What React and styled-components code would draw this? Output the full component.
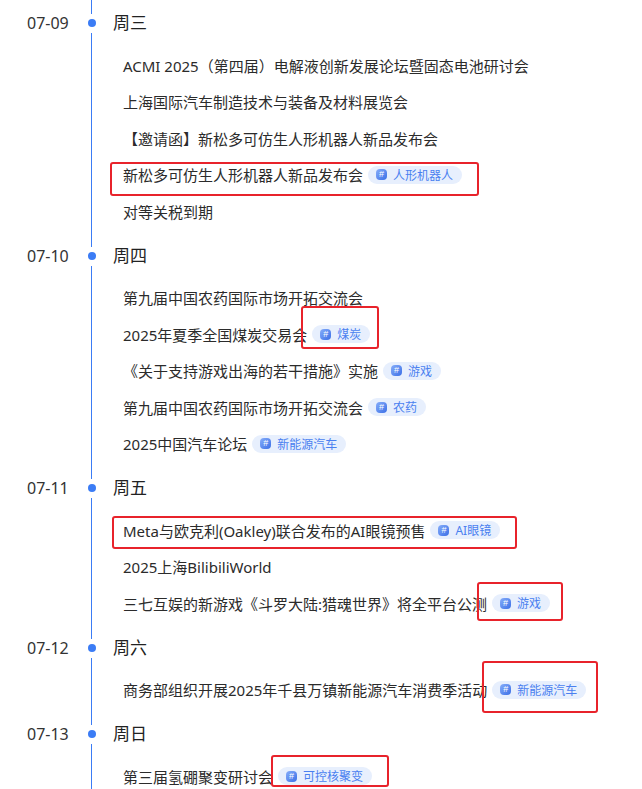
import React from "react";
import styled, { createGlobalStyle } from "styled-components";

const GlobalStyle = createGlobalStyle`
  html, body {
    margin: 0;
    padding: 0;
    background: #fff;
  }
  body {
    font-family: "Noto Sans", "Noto Sans CJK SC", sans-serif;
    color: #262626;
    overflow: hidden;
  }
`;

const Page = styled.div`
  position: relative;
  width: 642px;
  height: 789px;
  overflow: hidden;
`;

const Timeline = styled.div`
  padding-left: 27px;
  display: flex;
  flex-direction: column;
`;

const Day = styled.div`
  display: grid;
  grid-template-columns: 56px 17px 1fr;
`;

const DateLabel = styled.div`
  font-size: 16px;
  line-height: 46px;
  height: 46px;
  color: #333;
`;

const Rail = styled.div`
  display: flex;
  flex-direction: column;
  align-items: center;
`;

const Segment = styled.div`
  width: 1px;
  background: #3b7cf5;
  height: ${p => (p.$grow ? "auto" : "14px")};
  flex: ${p => (p.$grow ? "1" : "none")};
`;

const Dot = styled.div`
  width: 8px;
  height: 8px;
  border-radius: 50%;
  background: #3b7cf5;
  margin: 5px 0 6px;
`;

const Content = styled.div`
  padding-left: 13px;
  padding-bottom: 3px;
`;

const Weekday = styled.div`
  font-size: 17px;
  line-height: 46px;
  height: 46px;
  color: #222;
`;

const EventList = styled.div`
  padding: 1px 0 0 10px;
`;

const EventRow = styled.div`
  height: 36.5px;
  display: flex;
  align-items: center;
  font-size: 15px;
  color: #2b2b2b;
  white-space: nowrap;
`;

const Tag = styled.span`
  display: inline-flex;
  align-items: center;
  gap: 6px;
  height: 18px;
  margin-left: 5px;
  padding: 0 9px 0 8px;
  border-radius: 9px;
  background: #e7effd;
  color: #4a7ff0;
  font-size: 12px;
`;

const TagIcon = styled.span`
  width: 11px;
  height: 11px;
  border-radius: 4px;
  background: linear-gradient(135deg, #86adfa 0%, #3b6fe6 100%);
  color: #fff;
  font-family: "Liberation Sans", sans-serif;
  font-size: 9px;
  line-height: 11px;
  text-align: center;
`;

const Mark = styled.div`
  position: absolute;
  box-sizing: border-box;
  border: 2px solid #e8232b;
  border-radius: 3px;
  pointer-events: none;
`;

const days = [
  {
    date: "07-09",
    week: "周三",
    events: [
      { title: "ACMI 2025（第四届）电解液创新发展论坛暨固态电池研讨会" },
      { title: "上海国际汽车制造技术与装备及材料展览会" },
      { title: "【邀请函】新松多可仿生人形机器人新品发布会" },
      { title: "新松多可仿生人形机器人新品发布会", tag: "人形机器人" },
      { title: "对等关税到期" },
    ],
  },
  {
    date: "07-10",
    week: "周四",
    events: [
      { title: "第九届中国农药国际市场开拓交流会" },
      { title: "2025年夏季全国煤炭交易会", tag: "煤炭" },
      { title: "《关于支持游戏出海的若干措施》实施", tag: "游戏" },
      { title: "第九届中国农药国际市场开拓交流会", tag: "农药" },
      { title: "2025中国汽车论坛", tag: "新能源汽车" },
    ],
  },
  {
    date: "07-11",
    week: "周五",
    events: [
      { title: "Meta与欧克利(Oakley)联合发布的AI眼镜预售", tag: "AI眼镜" },
      { title: "2025上海BilibiliWorld" },
      { title: "三七互娱的新游戏《斗罗大陆:猎魂世界》将全平台公测", tag: "游戏" },
    ],
  },
  {
    date: "07-12",
    week: "周六",
    events: [
      { title: "商务部组织开展2025年千县万镇新能源汽车消费季活动", tag: "新能源汽车" },
    ],
  },
  {
    date: "07-13",
    week: "周日",
    events: [{ title: "第三届氢硼聚变研讨会", tag: "可控核聚变" }],
  },
];

// annotation boxes drawn over the screenshot
const marks = [
  { left: 110, top: 162, width: 369, height: 34 },
  { left: 301, top: 306, width: 78, height: 43 },
  { left: 112, top: 516, width: 405, height: 33 },
  { left: 477, top: 582, width: 86, height: 39 },
  { left: 482, top: 661, width: 116, height: 52 },
  { left: 271, top: 755, width: 118, height: 32 },
];

export default function App() {
  return (
    <Page>
      <GlobalStyle />
      <Timeline>
        {days.map(day => (
          <Day key={day.date}>
            <DateLabel>{day.date}</DateLabel>
            <Rail>
              <Segment />
              <Dot />
              <Segment $grow />
            </Rail>
            <Content>
              <Weekday>{day.week}</Weekday>
              <EventList>
                {day.events.map((ev, i) => (
                  <EventRow key={i}>
                    {ev.title}
                    {ev.tag && (
                      <Tag>
                        <TagIcon>#</TagIcon>
                        {ev.tag}
                      </Tag>
                    )}
                  </EventRow>
                ))}
              </EventList>
            </Content>
          </Day>
        ))}
      </Timeline>
      {marks.map((m, i) => (
        <Mark key={i} style={m} />
      ))}
    </Page>
  );
}
